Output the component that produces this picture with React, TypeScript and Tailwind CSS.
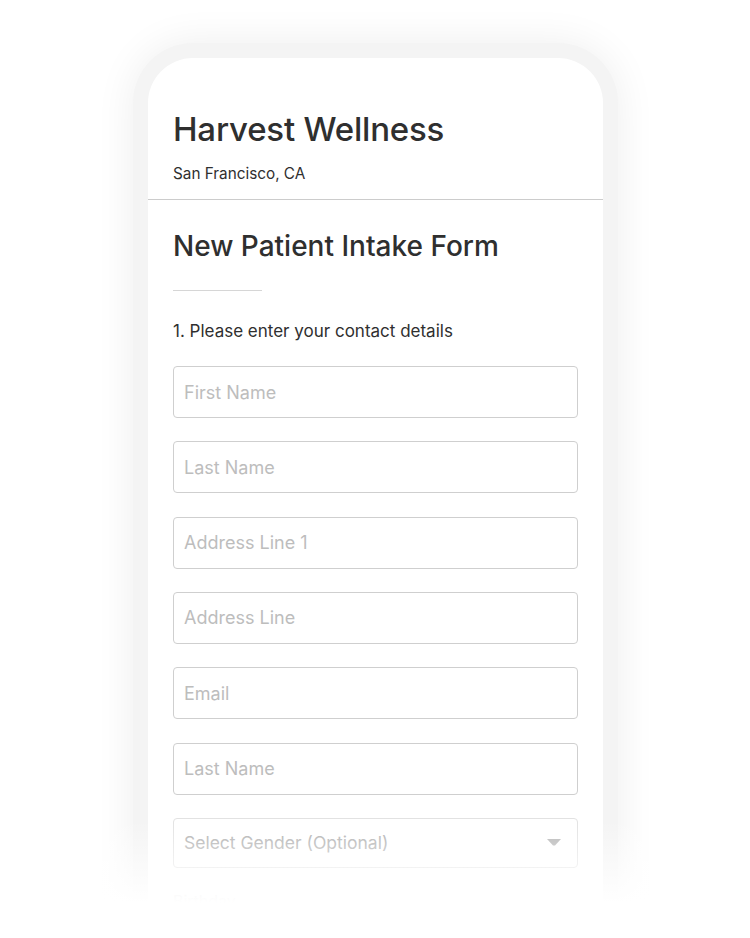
import React from 'react';

const fields = ['First Name', 'Last Name', 'Address Line 1', 'Address Line', 'Email', 'Last Name'];

function Field({ label }: { label: string }) {
  return (
    <div className="h-[52px] rounded-[4px] border border-[#cfcfcf] flex items-center px-[10px]">
      <span className="text-[18px] text-[#bdbdbd]">{label}</span>
    </div>
  );
}

export default function App() {
  return (
    <div
      className="relative w-[750px] h-[938px] overflow-hidden bg-white"
      style={{ fontFamily: 'Inter, "Noto Sans", sans-serif' }}
    >
      <div className="ml-[133px] mt-[43px] w-[485px] h-[1000px] rounded-[60px] bg-[#f4f4f4] p-[15px] shadow-[0_0_40px_rgba(0,0,0,0.07)]">
        <div className="h-full rounded-[45px] bg-white overflow-hidden">
          <div className="px-[25px] pt-[50px] pb-[15px] border-b border-[#cccccc]">
            <h1 className="text-[33px] leading-[42px] font-medium text-[#2f2f2f] tracking-[-0.2px]">Harvest Wellness</h1>
            <div className="mt-[14px] text-[15.3px] leading-[20px] text-[#2f2f2f]">San Francisco, CA</div>
          </div>
          <div className="px-[25px]">
            <h2 className="mt-[28px] text-[28px] leading-[36px] font-medium text-[#2f2f2f]">New Patient Intake Form</h2>
            <div className="mt-[26px] w-[89px] h-px bg-[#d6d6d6]" />
            <div className="mt-[29px] text-[17px] leading-[22px] text-[#2f2f2f]">1. Please enter your contact details</div>
            <div className="mt-[24px] flex flex-col gap-[23.33px]">
              {fields.map((f, i) => (
                <Field key={i} label={f} />
              ))}
              <div className="h-[50px] rounded-[4px] border border-[#e2e2e2] flex items-center justify-between pl-[10px] pr-[16px]">
                <span className="text-[17.5px] text-[#b0b0b0]">Select Gender (Optional)</span>
                <svg width="14" height="7" viewBox="0 0 14 7">
                  <path d="M0 0h14L8 6.5h-2z" fill="#b5b5b5" />
                </svg>
              </div>
              <div className="-mt-[2px] text-[16px] text-[#cfcfcf]">Birthday</div>
            </div>
          </div>
        </div>
      </div>
      <div className="absolute left-0 right-0 bottom-0 h-[118px] bg-gradient-to-b from-white/0 via-white via-[70%] to-white" />
    </div>
  );
}
